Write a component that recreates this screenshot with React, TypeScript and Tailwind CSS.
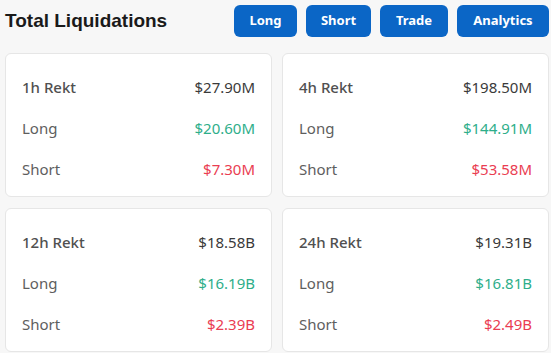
const buttons = [
  { label: "Long", w: "w-[63px]" },
  { label: "Short", w: "w-[65px]" },
  { label: "Trade", w: "w-[68px]" },
  { label: "Analytics", w: "w-[92px]" },
];

const cards = [
  { title: "1h Rekt", total: "$27.90M", long: "$20.60M", short: "$7.30M" },
  { title: "4h Rekt", total: "$198.50M", long: "$144.91M", short: "$53.58M" },
  { title: "12h Rekt", total: "$18.58B", long: "$16.19B", short: "$2.39B" },
  { title: "24h Rekt", total: "$19.31B", long: "$16.81B", short: "$2.49B" },
];

const Card = ({ title, total, long, short }: (typeof cards)[number]) => {
  return (
    <article className="h-[144px] rounded-md border border-[#e6e6e6] bg-white px-4 pt-[13px] pb-[7px]">
      <div className="flex h-[41px] items-center justify-between">
        <span className="font-medium text-[#505050]">{title}</span>
        <span className="text-[#3a3a3a]">{total}</span>
      </div>
      <div className="flex h-[41px] items-center justify-between">
        <span className="text-[#5e5e5e]">Long</span>
        <span className="text-[#2eae8a]">{long}</span>
      </div>
      <div className="flex h-[41px] items-center justify-between">
        <span className="text-[#5e5e5e]">Short</span>
        <span className="text-[#ea3d52]">{short}</span>
      </div>
    </article>
  );
};

export default function App() {
  return (
    <main className="h-[353px] w-[551px] overflow-hidden bg-[#f7f7f7] font-['Noto_Sans',sans-serif] text-[15px]">
      <header className="flex h-[42px] items-start justify-between pl-[5px] pr-[2px] pt-[5px]">
        <h1 className="pt-[1px] font-['Liberation_Sans',sans-serif] text-[19px] font-bold leading-[30px] text-[#1a1a1a]">
          Total Liquidations
        </h1>
        <nav className="flex gap-[9px]">
          {buttons.map(({ label, w }) => (
            <button
              key={label}
              className={`${w} h-[32px] rounded-md bg-[#0b66c6] text-[13px] font-bold text-white`}
            >
              {label}
            </button>
          ))}
        </nav>
      </header>

      <section className="mt-[11px] grid grid-cols-[267px_267px] gap-x-[10px] gap-y-[11px] pl-[5px]">
        {cards.map((c) => (
          <Card key={c.title} {...c} />
        ))}
      </section>
    </main>
  );
}
